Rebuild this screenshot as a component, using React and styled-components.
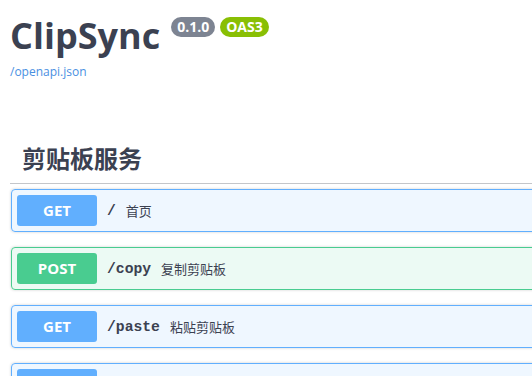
import styled, { createGlobalStyle } from "styled-components";

const GlobalStyle = createGlobalStyle`
  html, body {
    margin: 0;
    padding: 0;
    background: #fff;
    overflow: hidden;
  }
  body {
    font-family: "Open Sans", "Noto Sans CJK SC", sans-serif;
    color: #3b4151;
  }
`;

const METHOD_COLORS = {
  get: { main: "#61affe", bg: "rgba(97,175,254,.1)" },
  post: { main: "#49cc90", bg: "rgba(73,204,144,.1)" },
};

const Wrapper = styled.div`
  width: 1400px;
  padding: 0 10px;
  box-sizing: border-box;
`;

const Info = styled.div`
  padding-top: 11px;
  margin-bottom: 56px;
`;

const TitleRow = styled.div`
  display: flex;
  align-items: flex-start;
  gap: 5px;
`;

const Title = styled.h2`
  margin: 0 6px 0 0;
  font-size: 36px;
  font-weight: 700;
  line-height: 49px;
  color: #3b4151;
`;

const Badge = styled.span`
  margin-top: 6px;
  height: 20px;
  padding: 0 6px;
  border-radius: 10px;
  background: ${(p) => p.color};
  color: #fff;
  font-size: 14px;
  font-weight: 700;
  line-height: 20px;
`;

const SpecLink = styled.a`
  display: block;
  margin-top: 4px;
  font-size: 12px;
  line-height: 16px;
  color: #4990e2;
  text-decoration: none;
`;

const TagTitle = styled.h3`
  margin: 0 0 5px;
  padding: 9px 0 12px 12px;
  font-size: 24px;
  font-weight: 700;
  line-height: 26px;
  color: #3b4151;
  border-bottom: 1px solid rgba(59, 65, 81, 0.3);
  font-family: "Noto Sans CJK SC", sans-serif;
`;

const OpBlock = styled.div`
  margin: 0 0 15px 1px;
  border: 1px solid ${(p) => METHOD_COLORS[p.method].main};
  background: ${(p) => METHOD_COLORS[p.method].bg};
  border-radius: 4px;
  box-shadow: 0 0 3px rgba(0, 0, 0, 0.19);
`;

const Summary = styled.div`
  display: flex;
  align-items: center;
  padding: 5px;
`;

const Method = styled.span`
  min-width: 80px;
  height: 31px;
  line-height: 31px;
  border-radius: 3px;
  background: ${(p) => METHOD_COLORS[p.method].main};
  color: #fff;
  font-size: 15px;
  font-weight: 700;
  text-align: center;
`;

const Path = styled.span`
  padding: 0 10px;
  font-family: "Liberation Mono", monospace;
  font-size: 14.7px;
  font-weight: 700;
  color: #3b4151;
`;

const Description = styled.span`
  font-family: "Noto Sans CJK SC", sans-serif;
  font-size: 13px;
  color: #3b4151;
`;

const ops = [
  { method: "get", path: "/", desc: "首页" },
  { method: "post", path: "/copy", desc: "复制剪贴板" },
  { method: "get", path: "/paste", desc: "粘贴剪贴板" },
  { method: "get", path: "/history", desc: "剪贴板历史" },
];

export default function App() {
  return (
    <Wrapper>
      <GlobalStyle />
      <Info>
        <TitleRow>
          <Title>ClipSync</Title>
          <Badge color="#7d8492">0.1.0</Badge>
          <Badge color="#89bf04">OAS3</Badge>
        </TitleRow>
        <SpecLink href="#">/openapi.json</SpecLink>
      </Info>
      <TagTitle>剪贴板服务</TagTitle>
      {ops.map((op) => (
        <OpBlock key={op.path} method={op.method}>
          <Summary>
            <Method method={op.method}>{op.method.toUpperCase()}</Method>
            <Path>{op.path}</Path>
            <Description>{op.desc}</Description>
          </Summary>
        </OpBlock>
      ))}
    </Wrapper>
  );
}
